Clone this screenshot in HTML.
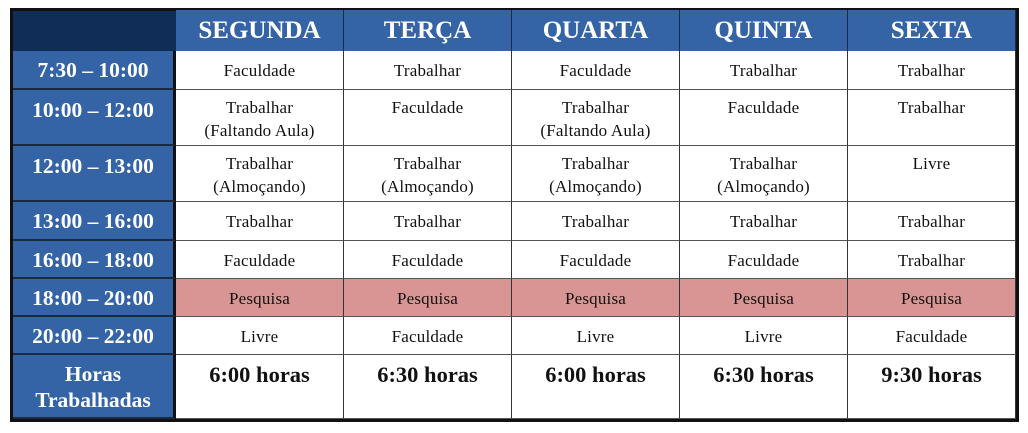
<!DOCTYPE html>
<html><head><meta charset="utf-8"><style>
body{margin:0;width:1028px;height:433px;background:#fff;position:relative;overflow:hidden;font-family:"Liberation Serif",serif;}
.c{position:absolute;box-sizing:border-box;text-align:center;white-space:nowrap;}
.h{background:#3463a6;color:#fff;font-weight:bold;font-size:25px;line-height:42px;border-right:1px solid #1a2a40;}
.t{background:#3463a6;color:#fff;font-weight:bold;font-size:21.5px;border-bottom:2px solid #1a2a40;}
.d{font-size:17px;color:#111;border-right:1px solid #333;border-bottom:1px solid #555;line-height:23px;letter-spacing:0.2px;}
.p{background:#d99594;}
.b{font-weight:bold;font-size:22.5px;letter-spacing:0;}
</style></head><body>
<div class="c" style="left:10px;top:8px;width:1009px;height:414px;border:3px solid #111;"></div>
<div class="c" style="left:13px;top:11px;width:163px;height:40px;background:#0f2d57;"></div>
<div id="g"></div>
<script>
const cols=[176,344,512,680,848,1016];
const rows=[51,90,146,202,241,279,317,355,419];
const heads=["SEGUNDA","TERÇA","QUARTA","QUINTA","SEXTA"];
const times=["7:30 – 10:00","10:00 – 12:00","12:00 – 13:00","13:00 – 16:00","16:00 – 18:00","18:00 – 20:00","20:00 – 22:00","Horas<br>Trabalhadas"];
const data=[
["Faculdade","Trabalhar","Faculdade","Trabalhar","Trabalhar"],
["Trabalhar<br>(Faltando Aula)","Faculdade","Trabalhar<br>(Faltando Aula)","Faculdade","Trabalhar"],
["Trabalhar<br>(Almoçando)","Trabalhar<br>(Almoçando)","Trabalhar<br>(Almoçando)","Trabalhar<br>(Almoçando)","Livre"],
["Trabalhar","Trabalhar","Trabalhar","Trabalhar","Trabalhar"],
["Faculdade","Faculdade","Faculdade","Faculdade","Trabalhar"],
["Pesquisa","Pesquisa","Pesquisa","Pesquisa","Pesquisa"],
["Livre","Faculdade","Livre","Livre","Faculdade"],
["6:00 horas","6:30 horas","6:00 horas","6:30 horas","9:30 horas"]];
let h="";
for(let i=0;i<5;i++)h+=`<div class="c h" style="left:${cols[i]}px;top:10px;width:${cols[i+1]-cols[i]}px;height:41px">${heads[i]}</div>`;
for(let r=0;r<8;r++){
 const top=rows[r],ht=rows[r+1]-rows[r];
 let tp,tl;
 if(r==7){tp=6;tl='26px';}else if(ht>45){tp=7;tl='26px';}else{tp=0;tl=ht+'px';}
 h+=`<div class="c t" style="left:13px;top:${top}px;width:163px;height:${ht}px;line-height:${tl};padding-top:${tp}px;border-right:3px solid #111">${times[r]}</div>`;
 for(let i=0;i<5;i++){
  h+=`<div class="c d ${r==5?'p':''} ${r==7?'b':''}" style="left:${cols[i]}px;top:${top}px;width:${cols[i+1]-cols[i]}px;height:${ht}px;padding-top:${r==7?8:(ht>45?6:(ht-23)/2)}px">${data[r][i]}</div>`;
 }
}
document.getElementById("g").innerHTML=h;
</script>
</body></html>
